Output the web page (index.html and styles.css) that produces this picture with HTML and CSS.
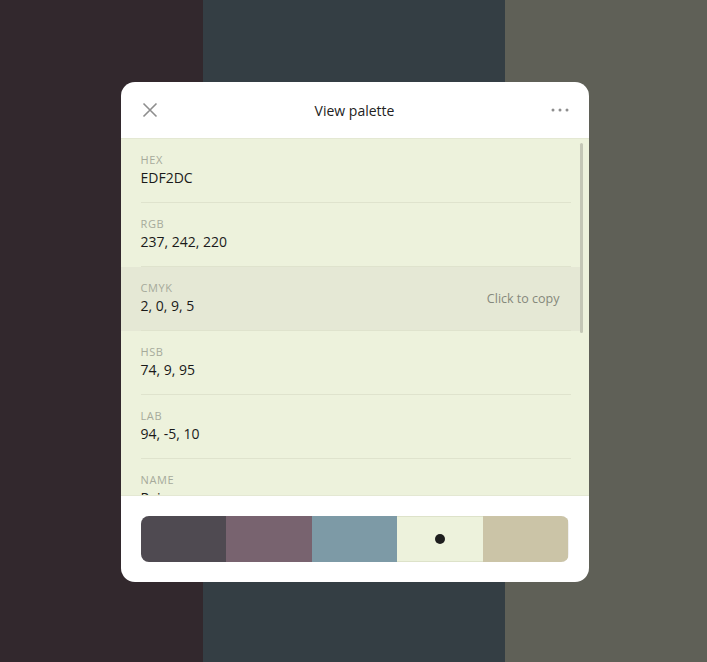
FILE: index.html
```html
<!DOCTYPE html>
<html lang="en">

<head>
    <meta charset="UTF-8">
    <meta name="viewport" content="width=device-width, initial-scale=1.0">
    <title>View palette</title>
    <link rel="stylesheet" href="styles.css">
</head>

<body>
    <div class="backdrop">
        <div class="band band-plum"></div>
        <div class="band band-slate"></div>
        <div class="band band-olive"></div>
    </div>

    <div class="overlay">
        <div class="modal">
            <header class="modal-header">
                <button class="icon-btn" aria-label="Close">
                    <svg width="16" height="16" viewBox="0 0 16 16">
                        <path d="M1.5 1.5 L14.5 14.5 M14.5 1.5 L1.5 14.5" stroke="#8e8e8e" stroke-width="1.6" fill="none" />
                    </svg>
                </button>
                <h1>View palette</h1>
                <button class="icon-btn" aria-label="More">
                    <svg width="18" height="4" viewBox="0 0 18 4">
                        <circle cx="2" cy="2" r="1.5" fill="#8e8e8e" />
                        <circle cx="9" cy="2" r="1.5" fill="#8e8e8e" />
                        <circle cx="16" cy="2" r="1.5" fill="#8e8e8e" />
                    </svg>
                </button>
            </header>

            <div class="values">
                <div class="row">
                    <div class="row-inner">
                        <div>
                            <div class="label">Hex</div>
                            <div class="value">EDF2DC</div>
                        </div>
                    </div>
                </div>
                <div class="row">
                    <div class="row-inner">
                        <div>
                            <div class="label">RGB</div>
                            <div class="value">237, 242, 220</div>
                        </div>
                    </div>
                </div>
                <div class="row active">
                    <div class="row-inner">
                        <div>
                            <div class="label">CMYK</div>
                            <div class="value">2, 0, 9, 5</div>
                        </div>
                        <span class="copy">Click to copy</span>
                    </div>
                </div>
                <div class="row">
                    <div class="row-inner">
                        <div>
                            <div class="label">HSB</div>
                            <div class="value">74, 9, 95</div>
                        </div>
                    </div>
                </div>
                <div class="row">
                    <div class="row-inner">
                        <div>
                            <div class="label">LAB</div>
                            <div class="value">94, -5, 10</div>
                        </div>
                    </div>
                </div>
                <div class="row">
                    <div class="row-inner">
                        <div>
                            <div class="label">Name</div>
                            <div class="value">Rainee</div>
                        </div>
                    </div>
                </div>
                <div class="scrollbar"></div>
            </div>

            <footer class="modal-footer">
                <div class="swatches">
                    <div class="swatch" style="background:#4f4a51"></div>
                    <div class="swatch" style="background:#78636f"></div>
                    <div class="swatch" style="background:#7d9aa6"></div>
                    <div class="swatch selected" style="background:#edf2dc"><span class="dot"></span></div>
                    <div class="swatch" style="background:#cbc4a7"></div>
                </div>
            </footer>
        </div>
    </div>
</body>

</html>
```

FILE: styles.css
```css
body {
    font-family: "Open Sans", "Noto Sans", Arial, sans-serif;
    margin: 0;
    padding: 0;
    width: 707px;
    height: 662px;
    overflow: hidden;
    position: relative;
}

.backdrop {
    display: flex;
    height: 662px;
}

.band {
    height: 100%;
}

.band-plum {
    width: 203px;
    background: #32282d;
}

.band-slate {
    width: 302px;
    background: #343e44;
}

.band-olive {
    flex: 1;
    background: #5f6057;
}

.overlay {
    position: absolute;
    top: 0;
    left: 0;
    right: 0;
    bottom: 0;
    display: flex;
    justify-content: center;
    padding: 82px 0 0 2px;
}

.modal {
    width: 468px;
    height: 500px;
    background: #fff;
    border-radius: 14px;
    overflow: hidden;
    display: flex;
    flex-direction: column;
}

.modal-header {
    height: 56px;
    flex: none;
    display: flex;
    align-items: center;
    justify-content: space-between;
    padding: 0 19px 0 19px;
    border-bottom: 1px solid #e4e8d3;
}

.modal-header h1 {
    margin: 0;
    font-size: 14px;
    font-weight: 400;
    color: #222;
    padding-top: 1px;
}

.icon-btn {
    width: 20px;
    height: 20px;
    padding: 0;
    border: none;
    background: none;
    display: flex;
    align-items: center;
    justify-content: center;
    cursor: pointer;
}

.values {
    position: relative;
    flex: 1;
    overflow: hidden;
    background: #edf2dc;
}

.row {
    width: 460px;
    box-sizing: border-box;
    padding: 0 10px 0 20px;
    cursor: pointer;
}

.row.active {
    background: #e5e8d5;
}

.row-inner {
    padding: 13px 10px 0 0;
    height: 50px;
    border-bottom: 1px solid #dfe3cd;
    display: flex;
    justify-content: space-between;
    align-items: flex-start;
}

.label {
    font-size: 11px;
    line-height: 16px;
    letter-spacing: 0.6px;
    text-transform: uppercase;
    color: #a6aa9b;
}

.value {
    font-size: 14px;
    line-height: 20px;
    color: #1a1a1a;
}

.copy {
    font-size: 12.5px;
    color: #85887c;
    margin-top: 10px;
    margin-right: 1px;
}

.scrollbar {
    position: absolute;
    top: 4px;
    left: 459px;
    width: 3px;
    height: 190px;
    border-radius: 2px;
    background: #c4c7b6;
}

.modal-footer {
    height: 86px;
    flex: none;
    border-top: 1px solid #e4e8d3;
    display: flex;
    align-items: center;
    padding: 0 20px;
}

.swatches {
    display: flex;
    width: 100%;
    height: 46px;
    border-radius: 8px;
    overflow: hidden;
    box-shadow: inset 0 0 0 1px rgba(0, 0, 0, 0.06);
}

.swatch {
    flex: 1;
    display: flex;
    align-items: center;
    justify-content: center;
}

.swatch.selected {
    box-shadow: inset 0 1px 0 #dde2c9, inset 0 -1px 0 #dde2c9;
}

.dot {
    width: 10px;
    height: 10px;
    border-radius: 50%;
    background: #1e1e1e;
}
```
